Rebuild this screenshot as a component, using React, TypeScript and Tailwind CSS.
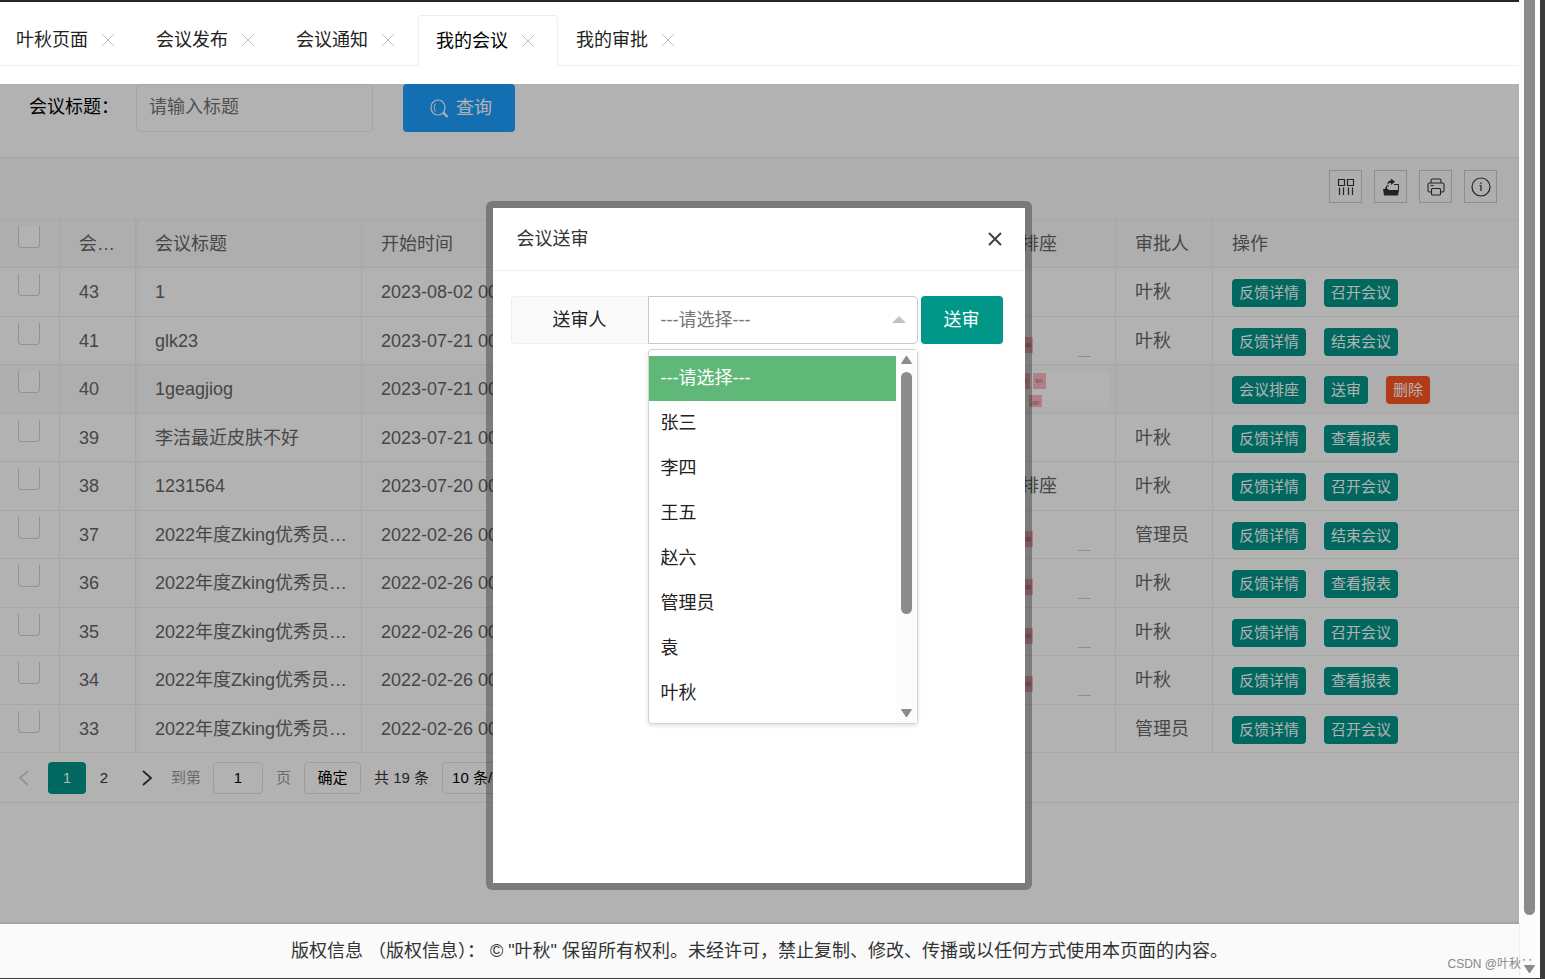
import React, { useState } from "react";

interface Action {
  text: string;
  danger?: boolean;
}

interface Meeting {
  id: number;
  title: string;
  startTime: string;
  seat: "none" | "pic" | "picFull" | "text";
  auditor: string;
  actions: Action[];
}

const tabs = ["叶秋页面", "会议发布", "会议通知", "我的会议", "我的审批"];

const award = "2022年度Zking优秀员工颁奖";

const feedback: Action = { text: "反馈详情" };
const open: Action = { text: "召开会议" };
const finish: Action = { text: "结束会议" };
const report: Action = { text: "查看报表" };

const meetings: Meeting[] = [
  { id: 43, title: "1", startTime: "2023-08-02 00:00", seat: "none", auditor: "叶秋", actions: [feedback, open] },
  { id: 41, title: "glk23", startTime: "2023-07-21 00:00", seat: "pic", auditor: "叶秋", actions: [feedback, finish] },
  {
    id: 40,
    title: "1geagjiog",
    startTime: "2023-07-21 00:00",
    seat: "picFull",
    auditor: "",
    actions: [{ text: "会议排座" }, { text: "送审" }, { text: "删除", danger: true }],
  },
  { id: 39, title: "李洁最近皮肤不好", startTime: "2023-07-21 00:00", seat: "none", auditor: "叶秋", actions: [feedback, report] },
  { id: 38, title: "1231564", startTime: "2023-07-20 00:00", seat: "text", auditor: "叶秋", actions: [feedback, open] },
  { id: 37, title: award, startTime: "2022-02-26 00:00", seat: "pic", auditor: "管理员", actions: [feedback, finish] },
  { id: 36, title: award, startTime: "2022-02-26 00:00", seat: "pic", auditor: "叶秋", actions: [feedback, report] },
  { id: 35, title: award, startTime: "2022-02-26 00:00", seat: "pic", auditor: "叶秋", actions: [feedback, open] },
  { id: 34, title: award, startTime: "2022-02-26 00:00", seat: "pic", auditor: "叶秋", actions: [feedback, report] },
  { id: 33, title: award, startTime: "2022-02-26 00:00", seat: "none", auditor: "管理员", actions: [feedback, open] },
];

const users = ["---请选择---", "张三", "李四", "王五", "赵六", "管理员", "袁", "叶秋"];

const cell = "truncate border-b border-r border-[#eee] pl-[19px] pr-2 text-left font-normal";
const titleCell = `${cell} shadow-[inset_5px_0_5px_-4px_rgba(0,0,0,0.06)]`;
const toolBtn = "flex h-[33px] w-[33px] items-center justify-center border border-[#ccc] text-[#333]";

const CloseIcon = ({ className }: { className: string }) => (
  <svg className={className} viewBox="0 0 14 14" fill="none" stroke="currentColor" aria-hidden="true">
    <path d="M1 1 13 13M13 1 1 13" />
  </svg>
);

// 排座缩略图
const SeatPic = ({ full }: { full?: boolean }) =>
  full ? (
    <svg className="ml-auto block h-9 w-24" viewBox="0 0 96 36" aria-hidden="true">
      <rect width="96" height="36" fill="#fff" />
      <path d="M4 2h13v16H4zM20 2h13v16H20zM16 24h13v12H16z" fill="#ffb6c1" />
      <path d="M7 9h7M7 11h7M22 9h8M23 11h7M19 31h8M18 33h8M24 8v4M23 30v4" stroke="#a87880" strokeWidth="0.8" />
    </svg>
  ) : (
    <svg className="ml-auto block h-9 w-24" viewBox="0 0 96 36" aria-hidden="true">
      <path d="M4 14h16v16H4zM65 33h13v1H65z" fill="#ffb6c1" />
      <path d="M11 21h7M12 23h7M15 20v5" stroke="#a87880" strokeWidth="0.8" />
    </svg>
  );

const TabBar: React.FC = () => {
  const [active, setActive] = useState(3);
  return (
    <nav className="-ml-0.5 flex h-[82px] pt-[13px]">
      {tabs.map((t, i) => (
        <div
          key={t}
          className={
            i === active
              ? "flex h-[51px] w-[140px] items-center rounded-t-sm border border-b-0 border-[#eee] pb-px pl-[17px] text-black"
              : "flex h-[51px] w-[140px] items-center border-b border-[#eee] pl-[18px] text-[#222]"
          }
        >
          <button type="button" className="leading-6" onClick={() => setActive(i)}>
            {t}
          </button>
          <button type="button" aria-label={"关闭" + t} className="ml-[13px] text-[#c2c2c2]">
            <CloseIcon className="h-[14px] w-[14px]" />
          </button>
        </div>
      ))}
      <div className="h-[51px] flex-1 border-b border-[#eee]" />
    </nav>
  );
};

const SearchForm: React.FC = () => (
  <form className="flex h-[73px] items-start" onSubmit={(e) => e.preventDefault()}>
    <label htmlFor="title" className="w-[136px] pl-[29px] leading-[46px] text-black">
      会议标题：
    </label>
    <input
      id="title"
      type="text"
      placeholder="请输入标题"
      className="h-12 w-[237px] rounded-sm border border-[#eee] px-3 pb-0.5 placeholder:text-[#757575]"
    />
    <button
      type="submit"
      className="ml-[30px] flex h-12 w-28 items-center gap-[7px] rounded-sm bg-[#1e9fff] pl-[27px] text-white"
    >
      <svg className="h-[19px] w-[19px]" viewBox="0 0 19 19" fill="none" stroke="currentColor" aria-hidden="true">
        <ellipse cx="8" cy="8.5" rx="7" ry="7.5" strokeWidth="1.2" />
        <path d="M5.5 4.5C3.8 6.5 3.8 10 5.5 12.5" />
        <path d="m13.2 13.6 4.3 4.4" strokeWidth="2.2" />
      </svg>
      查询
    </button>
  </form>
);

const Toolbar: React.FC = () => (
  <div className="flex h-[62px] items-center justify-end gap-3 border-t border-r border-[#eee] bg-[#fafafa] pb-1 pr-[21px]">
    <button type="button" title="筛选列" className={toolBtn}>
      <svg className="h-[18px] w-[18px]" viewBox="0 0 18 18" fill="none" stroke="currentColor" aria-hidden="true">
        <path d="M1.5 1.5h6v6h-6zM10.5 1.5h6v6h-6z" strokeWidth="1.2" />
        <path d="M2.5 9.5V17M6.500 9.5V17M11.500 9.5V17M15.500 9.5V17" strokeWidth="1.2" />
      </svg>
    </button>
    <button type="button" title="导出" className={toolBtn}>
      <svg className="h-[18px] w-[18px]" viewBox="0 0 18 18" aria-hidden="true">
        <path d="M1 11h5l1 1h10l-1 5.500H2z" fill="currentColor" />
        <path d="M4.500 11V8H7M12 6.500h4.500V12M3.500 9.500v2" fill="none" stroke="currentColor" />
        <path d="M5.500 7C5.500 3.500 7 2.500 9 2.500V.5l4 3.300-4 3.200V5C7 5 6.500 5.500 5.500 7z" fill="currentColor" />
      </svg>
    </button>
    <button type="button" title="打印" className={toolBtn}>
      <svg className="h-[18px] w-[18px]" viewBox="0 0 18 18" fill="none" stroke="currentColor" strokeWidth="1.100" aria-hidden="true">
        <path d="M4 5V2.500Q4 1 5.500 1h7Q14 1 14 2.500V5M4 14H2.500Q1 14 1 12.500v-6Q1 5 2.500 5h13Q17 5 17 6.500v6q0 1.500-1.500 1.500H14M3.500 7.500h3" />
        <rect x="4.500" y="10.500" width="9" height="6.500" rx="1" />
      </svg>
    </button>
    <button type="button" title="提示" className={toolBtn}>
      <svg className="h-5 w-5" viewBox="0 0 20 20" fill="none" stroke="currentColor" strokeWidth="1.200" aria-hidden="true">
        <circle cx="10" cy="10" r="9" />
        <path d="M10 8.500V14M10 5.500V7M8.500 8.500H10" />
      </svg>
    </button>
  </div>
);

const checkbox = "block h-[22px] w-[22px] appearance-none rounded-b-sm border border-t-0 border-[#d2d2d2] bg-white";

const MeetingTable: React.FC = () => (
  <table className="w-full table-fixed border-separate border-spacing-0 border-t border-[#eee] text-[#666]">
    <colgroup>
      <col className="w-[60px]" />
      <col className="w-[76px]" />
      <col className="w-[226px]" />
      <col className="w-[226px]" />
      <col />
      <col className="w-[150px]" />
      <col className="w-[97px]" />
      <col className="w-[306px]" />
    </colgroup>
    <thead className="bg-[#fafafa]">
      <tr className="h-12">
        <th className="border-b border-r border-[#eee] pl-[18px] pt-1.5 align-top">
          <input type="checkbox" aria-label="全选" className={checkbox} />
        </th>
        <th className={cell}>会议编号</th>
        <th className={titleCell}>会议标题</th>
        <th className={cell}>开始时间</th>
        <th className={cell}></th>
        <th className={cell}>会议排座</th>
        <th className={cell}>审批人</th>
        <th className={cell}>操作</th>
      </tr>
    </thead>
    <tbody>
      {meetings.map((m) => (
        <tr key={m.id} className={m.id === 40 ? "h-[49px] bg-[#fafafa]" : "odd:h-[49px] even:h-12"}>
          <td className="border-b border-r border-[#eee] pl-[18px] pt-1.5 align-top">
            <input type="checkbox" aria-label={"选择会议" + m.id} className={checkbox} />
          </td>
          <td className={cell}>{m.id}</td>
          <td className={titleCell}>{m.title}</td>
          <td className={cell}>{m.startTime}</td>
          <td className={cell}></td>
          {m.seat === "text" || m.seat === "none" ? (
            <td className={cell}>{m.seat === "text" ? "尚未排座" : ""}</td>
          ) : (
            <td className="border-b border-r border-[#eee] pr-1.5">
              <SeatPic full={m.seat === "picFull"} />
            </td>
          )}
          <td className={cell}>{m.auditor}</td>
          <td className="border-b border-r border-[#eee] pl-[19px] pt-0.5">
            <div className="flex gap-[18px]">
              {m.actions.map((a) => (
                <button
                  key={a.text}
                  type="button"
                  className={`h-7 rounded-sm px-[7px] text-[15px] leading-7 text-white ${a.danger ? "bg-[#ff5722]" : "bg-[#009688]"}`}
                >
                  {a.text}
                </button>
              ))}
            </div>
          </td>
        </tr>
      ))}
    </tbody>
  </table>
);

const Pager: React.FC = () => (
  <div className="flex h-[50px] items-center border-b border-r border-[#eee] text-[15px] text-[#333]">
    <button type="button" aria-label="上一页" className="flex w-12 justify-center text-[#d2d2d2]">
      <svg className="h-4 w-4" viewBox="0 0 16 16" fill="none" stroke="currentColor" strokeWidth="1.800" aria-hidden="true">
        <path d="M12 1 4 8l8 7" />
      </svg>
    </button>
    <button type="button" className="h-8 w-[38px] rounded-sm bg-[#009688] text-white">
      1
    </button>
    <button type="button" className="h-8 w-9">
      2
    </button>
    <button type="button" aria-label="下一页" className="flex w-[49px] justify-center">
      <svg className="h-4 w-4" viewBox="0 0 16 16" fill="none" stroke="currentColor" strokeWidth="1.800" aria-hidden="true">
        <path d="m4 1 8 7-8 7" />
      </svg>
    </button>
    <label htmlFor="page" className="text-[#999]">
      到第
    </label>
    <input
      id="page"
      type="text"
      defaultValue="1"
      className="ml-3 h-8 w-[50px] rounded-sm border border-[#e2e2e2] text-center text-black"
    />
    <span className="mx-[13px] text-[#999]">页</span>
    <button type="button" className="h-8 w-[57px] rounded-sm border border-[#e2e2e2] text-black">
      确定
    </button>
    <span className="mx-[13px]">共 19 条</span>
    <select aria-label="每页条数" className="h-8 w-28 appearance-none rounded-sm border border-[#e2e2e2] px-[9px] text-black">
      <option>10 条/页</option>
      <option>20 条/页</option>
    </select>
  </div>
);

const AuditDialog: React.FC = () => {
  const [user, setUser] = useState(users[0]);
  return (
    <div
      role="dialog"
      aria-label="会议送审"
      className="h-[689px] w-[546px] rounded-md border-[7px] border-black/30 bg-white bg-clip-padding"
    >
      <div className="flex h-[63px] items-center justify-between border-b border-[#eee] pb-px pr-[23px] pl-6 text-[#333]">
        <h2>会议送审</h2>
        <button type="button" aria-label="关闭" className="text-[#3e4150]">
          <CloseIcon className="h-[14px] w-[14px] stroke-2" />
        </button>
      </div>
      <form className="flex px-[18px] pt-[25px]" onSubmit={(e) => e.preventDefault()}>
        <label
          htmlFor="auditor"
          className="h-12 w-[137px] rounded-l-sm border border-r-0 border-[#eee] bg-[#fafafa] text-center leading-[46px] text-[#222]"
        >
          送审人
        </label>
        <div className="relative w-[270px]">
          <select
            id="auditor"
            value={user}
            onChange={(e) => setUser(e.target.value)}
            className="h-12 w-full appearance-none rounded-r-sm border border-[#c9c9c9] bg-white px-3 text-[#757575]"
          >
            {users.map((u) => (
              <option key={u}>{u}</option>
            ))}
          </select>
          <svg className="pointer-events-none absolute top-5 right-3 h-[7px] w-[14px] text-[#c2c2c2]" viewBox="0 0 14 7" aria-hidden="true">
            <path d="M7 0l7 7H0z" fill="currentColor" />
          </svg>
          <div className="absolute top-[53px] left-0 flex w-full rounded-sm border border-[#d2d2d2] bg-white shadow-[0_2px_4px_rgba(0,0,0,0.12)]">
            <ul className="flex-1 pt-1.5 pb-[7px] text-[#222]">
              {users.map((u) => (
                <li key={u}>
                  <button
                    type="button"
                    onClick={() => setUser(u)}
                    className={`block h-[45px] w-full px-3 pb-0.5 text-left ${u === user ? "bg-[#5fb878] text-white" : ""}`}
                  >
                    {u}
                  </button>
                </li>
              ))}
            </ul>
            <div className="flex w-[21px] flex-col items-center bg-[#fcfcfc] py-[5px] text-[#8b8b8b]">
              <svg className="h-[9px] w-[11px]" viewBox="0 0 11 9" aria-hidden="true">
                <path d="M5.500 1 10.500 8.500H.5z" fill="currentColor" stroke="currentColor" strokeLinejoin="round" />
              </svg>
              <div className="mt-2 h-[242px] w-[11px] rounded-full bg-[#8b8b8b]" />
              <svg className="mt-auto h-[9px] w-[11px]" viewBox="0 0 11 9" aria-hidden="true">
                <path d="M.5.5h10L5.500 8z" fill="currentColor" stroke="currentColor" strokeLinejoin="round" />
              </svg>
            </div>
          </div>
        </div>
        <button type="submit" className="ml-[3px] h-12 w-[82px] rounded-sm bg-[#009688] text-white">
          送审
        </button>
      </form>
    </div>
  );
};

const App: React.FC = () => {
  return (
    <div className="flex min-h-screen border-b border-[#3b3b3b] bg-white font-['Liberation_Sans','Noto_Sans_CJK_SC',sans-serif] text-[18px] leading-6">
      <div className="relative flex min-w-0 flex-1 flex-col border-t-2 border-[#23262e]">
        <TabBar />
        <main className="relative flex-1">
          <SearchForm />
          <Toolbar />
          <MeetingTable />
          <Pager />
          {/* 遮罩层 */}
          <div className="absolute inset-0 flex items-start justify-center bg-black/30 pt-[117px] pr-0.5">
            <AuditDialog />
          </div>
        </main>
        <footer className="relative flex h-[54px] items-center justify-center bg-[#fafafa] text-[#333] shadow-[0_-1px_2px_rgba(0,0,0,0.15)]">
          版权信息 （版权信息）： © "叶秋" 保留所有权利。未经许可，禁止复制、修改、传播或以任何方式使用本页面的内容。
        </footer>
      </div>
      <div className="flex w-[21px] flex-col items-center bg-[#fcfcfc]">
        <div className="mb-[50px] w-[11px] flex-1 rounded-b-full bg-[#8b8b8b]" />
        <svg className="mb-1 h-[9px] w-[11px] text-[#8b8b8b]" viewBox="0 0 11 9" aria-hidden="true">
          <path d="M.5.5h10L5.500 8z" fill="currentColor" stroke="currentColor" strokeLinejoin="round" />
        </svg>
      </div>
      <div className="w-[5px] bg-[#3b3b3b]" />
      <span className="absolute right-3 bottom-1.5 text-[12px] leading-[18px] text-[#888]">CSDN @叶秋∵</span>
    </div>
  );
};

export default App;
